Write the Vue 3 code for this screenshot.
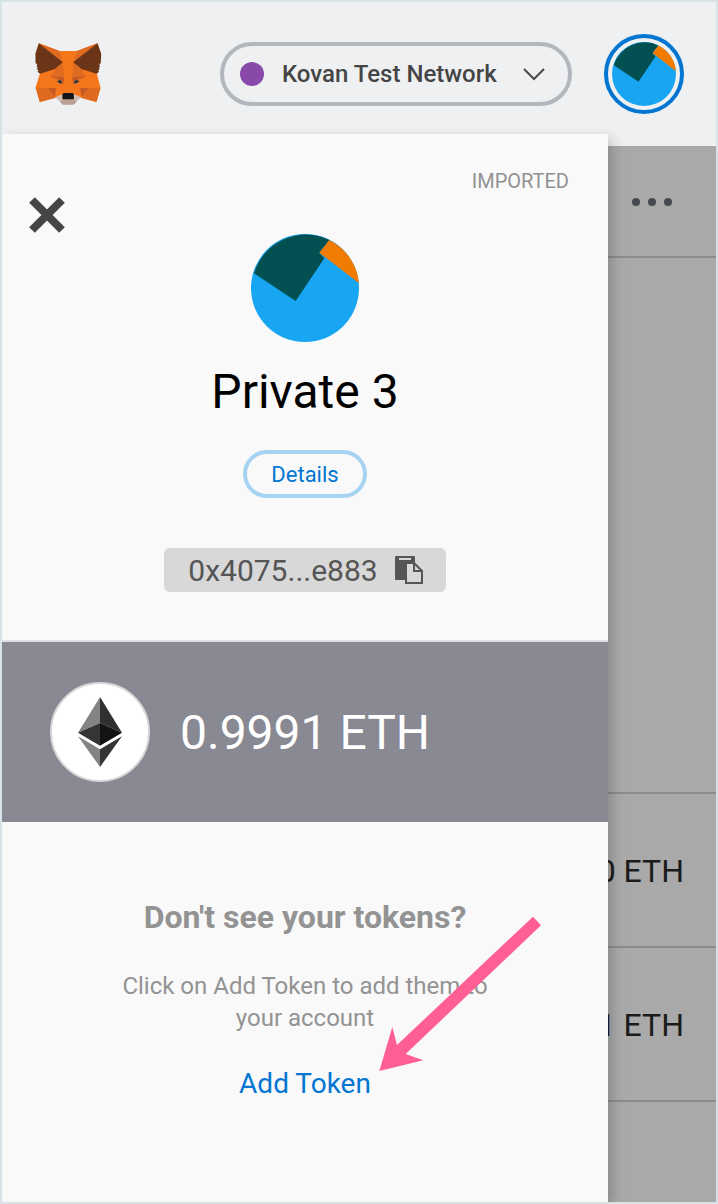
<script setup>
import { h, ref } from 'vue'

const network = ref('Kovan Test Network')
const account = { name: 'Private 3', address: '0x4075...e883', balance: '0.9991 ETH' }
const transactions = ['0 ETH', '1 ETH']

const Identicon = () =>
  h('svg', { viewBox: '156 42 324 324', width: '100%', height: '100%', class: 'identicon', 'aria-hidden': 'true' }, [
    h('circle', { cx: 318, cy: 204, r: 162, fill: '#18a6f2' }),
    h('path', { d: 'M290 243L165 160A162 162 0 0 1 391 60L361 98L376 115z', fill: '#035053' }),
    h('path', { d: 'M361 98L391 60A162 162 0 0 1 480 190z', fill: '#f27c02' }),
  ])
</script>

<template>
  <div class="app">
    <header class="bar">
      <svg class="fox" viewBox="105 126 201 192" role="img" aria-label="MetaMask">
        <path fill="#f6771b" d="M118 130L180 153H232L294 130L304 161L292 221L303 263L291 306L245 293L223 299H190L167 293L121 306L108 263L121 221L108 161z" />
        <path fill="#df6b20" d="M118 130l62 23 10 34zM294 130l-62 23-11 34z" />
        <path fill="#df6b20" d="M109 263h36l22 31-46 12zM303 263h-37l-20 31 45 12z" />
        <path fill="#df6b20" d="M153 230l13-22 24-21 4 46-4 14zM259 230l-11-22-27-21-3 46 4 14z" />
        <path fill="#6b3518" d="M118 130l72 57-24 20-44 14-8-6 3-4-6-4 4-3-4-6 3-3-6-7 0-27zM294 130l-73 57 25 20 45 14 8-6-3-4 5-4-3-3 4-6-3-3 5-7 1-27z" />
        <path fill="#c65a25" d="M145 264h24l-2 28zM266 264h-24l4 28zM153 230l40 2 0 18-14-12zM259 230l-40 2 0 18 14-12z" />
        <path fill="#f6771b" d="M190 187h31l-5 50 8 41h-36l7-41z" />
        <path fill="#263747" d="M172 244l11-5 6 12-9-1zM240 244l-11-5-7 12 9-1z" />
        <path fill="#d3bdb2" d="M167 292l22-10v17h34v-17l22 10-24 21h-31z" />
        <path fill="#baa195" d="M181 306l10-8h30l11 8-11 8h-31z" />
        <path fill="#141619" d="M192 279h28l3 4v15h-34v-15z" />
      </svg>
      <label class="network">
        <span class="dot"></span>
        <select v-model="network" aria-label="Network">
          <option>Kovan Test Network</option>
        </select>
        <svg class="chevron" viewBox="0 0 24 14" aria-hidden="true">
          <path d="M2 2l10 10L22 2" fill="none" stroke="#4a4a4a" stroke-width="2" />
        </svg>
      </label>
      <button class="account" aria-label="My accounts"><Identicon /></button>
    </header>

    <main class="stage">
      <section class="wallet">
        <div class="wallet-menu">
          <button class="more" aria-label="More options"><i></i><i></i><i></i></button>
        </div>
        <div class="wallet-balance"></div>
        <div v-for="tx in transactions" :key="tx" class="tx">{{ tx }}</div>
      </section>

      <aside class="drawer">
        <div class="profile">
          <span class="tag">IMPORTED</span>
          <button class="close" aria-label="Close">
            <svg viewBox="0 0 36 36" aria-hidden="true">
              <path d="M3 3l30 30M33 3L3 33" stroke="#454545" stroke-width="8" />
            </svg>
          </button>
          <div class="avatar"><Identicon /></div>
          <h1>{{ account.name }}</h1>
          <button class="details">Details</button>
          <button class="address">
            {{ account.address }}
            <svg viewBox="0 0 30 30" aria-hidden="true">
              <path fill="#555" fill-rule="evenodd" d="M2 1h18a1 1 0 0 1 1 1v6H11v17H2a1 1 0 0 1-1-1V2a1 1 0 0 1 1-1zM5 3v2h12V3z" />
              <path fill="none" stroke="#555" stroke-width="2" d="M12 8h8l8 8v12H12zM20 8v8h8" />
            </svg>
          </button>
        </div>

        <div class="balance">
          <span class="coin">
            <svg viewBox="234 201 132 210" aria-hidden="true">
              <path fill="#828384" d="M300 201v78l-66 29z" />
              <path fill="#2f3030" d="M300 201v78l66 29z" />
              <path fill="#343535" d="M300 279v68l-66-39z" />
              <path fill="#131313" d="M300 279v68l66-39z" />
              <path fill="#828384" d="M234 319l66 39v53z" />
              <path fill="#343535" d="M366 319l-66 39v53z" />
            </svg>
          </span>
          <span>{{ account.balance }}</span>
        </div>

        <div class="tokens">
          <h2>Don't see your tokens?</h2>
          <p>Click on Add Token to add them to your account</p>
          <a href="#add-token">Add Token</a>
          <svg class="arrow" viewBox="837 108 486 465" aria-hidden="true">
            <path fill="#ff5f93" d="M1299 110l24 26-406 386 53 19-132 32 39-132 14 54z" />
          </svg>
        </div>
      </aside>
    </main>
  </div>
</template>

<style>
body {
  margin: 0;
}
</style>

<style scoped>
.app {
  box-sizing: border-box;
  min-height: 100vh;
  display: flex;
  flex-direction: column;
  border: 2px solid #d8e3e7;
  font-family: Roboto, "Liberation Sans", sans-serif;
  background: #eff0f2;
  overflow: hidden;
}
button {
  margin: 0;
  padding: 0;
  border: 0;
  background: none;
  font-family: inherit;
  cursor: pointer;
}
.identicon {
  display: block;
}
.bar {
  box-sizing: border-box;
  height: 144px;
  display: flex;
  align-items: center;
  gap: 32px;
  padding: 0 32px;
}
.fox {
  width: 68px;
  height: 64px;
  margin-right: auto;
}
.network {
  box-sizing: border-box;
  width: 352px;
  height: 64px;
  display: grid;
  align-items: center;
  border: 4px solid #b2b7be;
  border-radius: 32px;
}
.network > * {
  grid-area: 1 / 1;
}
.dot {
  width: 24px;
  height: 24px;
  margin-left: 16px;
  border-radius: 50%;
  background: #8849a9;
}
.network select {
  appearance: none;
  width: 100%;
  height: 56px;
  padding: 0 48px 0 58px;
  border: 0;
  background: none;
  color: #454545;
  font: 500 24px/56px Roboto, "Liberation Sans", sans-serif;
}
.chevron {
  justify-self: end;
  width: 24px;
  height: 14px;
  margin-right: 22px;
  pointer-events: none;
}
.account {
  box-sizing: border-box;
  width: 80px;
  height: 80px;
  padding: 4px;
  border: 4px solid #0376d2;
  border-radius: 50%;
}
.stage {
  flex: 1;
  display: grid;
  background: #a9a9a9;
}
.wallet,
.drawer {
  grid-area: 1 / 1;
}
.wallet-menu,
.wallet-balance,
.tx {
  box-sizing: border-box;
  display: flex;
  align-items: center;
  justify-content: flex-end;
  border-bottom: 2px solid #8b8b92;
}
.wallet-menu {
  height: 112px;
  padding: 2px 44px 0 0;
}
.more {
  display: flex;
  gap: 8px;
}
.more i {
  width: 8px;
  height: 8px;
  border-radius: 50%;
  background: #454a50;
}
.wallet-balance {
  height: 536px;
}
.tx {
  height: 154px;
  padding: 2px 32px 0 0;
  color: #1b1b1b;
  font-size: 32px;
}
.drawer {
  position: relative;
  margin: -12px 108px 0 0;
  background: #f9f9f9;
  box-shadow: 4px 4px 12px rgba(0, 0, 0, 0.2);
}
.profile {
  display: flex;
  flex-direction: column;
  align-items: center;
  padding: 35px 0 48px;
  border-bottom: 2px solid #dee0e3;
}
.tag {
  align-self: flex-end;
  margin-right: 39px;
  color: #919191;
  font-size: 20px;
  line-height: 24px;
}
.close {
  align-self: flex-start;
  width: 36px;
  height: 36px;
  margin: 4px 0 0 27px;
}
.close svg {
  display: block;
}
.avatar {
  width: 108px;
  height: 108px;
  margin-top: 1px;
}
h1 {
  margin: 22px 0 30px;
  color: #000;
  font-size: 48px;
  font-weight: 400;
  line-height: 56px;
}
.details {
  box-sizing: border-box;
  height: 48px;
  padding: 0 24px;
  border: 4px solid #a5d3f1;
  border-radius: 24px;
  color: #0376d2;
  font-size: 22px;
}
.address {
  display: flex;
  align-items: center;
  gap: 16px;
  height: 44px;
  margin-top: 50px;
  padding: 0 22px 0 24px;
  border-radius: 6px;
  background: #d8d8d8;
  color: #555;
  font-size: 30px;
}
.address svg {
  width: 30px;
  height: 30px;
}
.balance {
  display: flex;
  align-items: center;
  gap: 30px;
  height: 180px;
  padding-left: 48px;
  background: #898993;
  color: #fff;
  font-size: 48px;
}
.coin {
  box-sizing: border-box;
  width: 100px;
  height: 100px;
  display: grid;
  place-items: center;
  border: 2px solid #d8d8d8;
  border-radius: 50%;
  background: #fff;
}
.coin svg {
  width: 44px;
  height: 70px;
}
.tokens {
  position: relative;
  display: flex;
  flex-direction: column;
  align-items: center;
  padding: 76px 96px;
  color: #939393;
  text-align: center;
}
h2 {
  margin: 0;
  font-size: 32px;
  font-weight: 700;
  line-height: 38px;
}
p {
  margin: 34px 0;
  font-size: 24px;
  line-height: 32px;
}
.tokens a {
  color: #0376d2;
  font-size: 28px;
  line-height: 32px;
  text-decoration: none;
}
.arrow {
  position: absolute;
  top: 94px;
  left: calc(50% + 74px);
  width: 162px;
  height: 155px;
  pointer-events: none;
}
</style>
